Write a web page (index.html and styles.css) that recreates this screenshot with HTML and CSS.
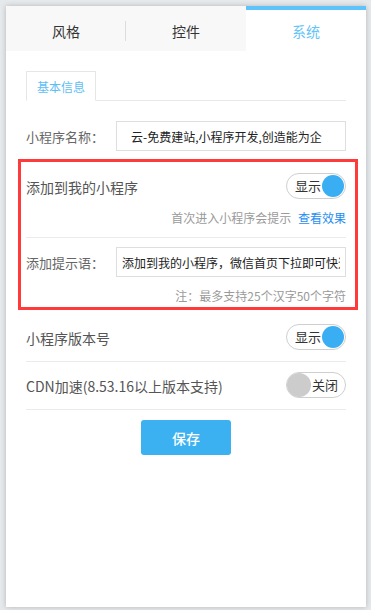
FILE: index.html
```html
<!DOCTYPE html>
<html lang="zh-CN">
<head>
<meta charset="utf-8">
<title>系统设置</title>
<link rel="stylesheet" href="styles.css">
</head>
<body>
<div class="panel">
  <div class="tabs">
    <div class="tab tab--split">风格</div>
    <div class="tab">控件</div>
    <div class="tab tab--active">系统</div>
  </div>
  <div class="content">
    <div class="subtabs">
      <div class="subtab">基本信息</div>
    </div>
    <div class="field">
      <label class="field-label">小程序名称：</label>
      <input class="field-input field-input--wide" type="text" value="云-免费建站,小程序开发,创造能为企">
    </div>
    <div class="highlight">
      <div class="row row--first">
        <span class="row-label">添加到我的小程序</span>
        <span class="toggle toggle--on"><span class="toggle-text">显示</span><span class="toggle-knob"></span></span>
      </div>
      <div class="hint">首次进入小程序会提示 <a class="hint-link">查看效果</a></div>
      <div class="divider"></div>
      <div class="field field--inner">
        <label class="field-label">添加提示语：</label>
        <input class="field-input" type="text" value="添加到我的小程序，微信首页下拉即可快速访问">
      </div>
      <div class="hint hint--note">注：最多支持25个汉字50个字符</div>
    </div>
    <div class="row row--line row--after">
      <span class="row-label">小程序版本号</span>
      <span class="toggle toggle--on"><span class="toggle-text">显示</span><span class="toggle-knob"></span></span>
    </div>
    <div class="row row--line">
      <span class="row-label">CDN加速(8.53.16以上版本支持)</span>
      <span class="toggle toggle--off"><span class="toggle-knob"></span><span class="toggle-text">关闭</span></span>
    </div>
    <div class="actions">
      <button class="btn-save" type="button">保存</button>
    </div>
  </div>
</div>
</body>
</html>
```
FILE: styles.css
```css
* { box-sizing: border-box; }
html, body { margin: 0; height: 100%; }
body {
  background: #e6e9ec;
  padding: 6px 5px 3px 6px;
  font-family: "Noto Sans CJK SC", "Noto Sans", sans-serif;
  color: #333;
}
.panel {
  width: 360px;
  height: 601px;
  background: #fff;
  box-shadow: 0 0 5px rgba(0, 0, 0, 0.22);
}
.tabs {
  display: flex;
  height: 45px;
}
.tab {
  flex: 1;
  background: #f8f8f8;
  border-top: 4px solid transparent;
  text-align: center;
  font-size: 14px;
  line-height: 42px;
  color: #333;
  position: relative;
}
.tab--split::after {
  content: "";
  position: absolute;
  right: 0;
  top: 11px;
  width: 1px;
  height: 20px;
  background: #dcdcdc;
}
.tab--active {
  background: #fff;
  border-top-color: #5ec2fb;
  color: #63c3f7;
}
.content {
  padding: 20px 20px 0;
}
.subtabs {
  display: flex;
  border-bottom: 1px solid #e8e8e8;
}
.subtab {
  height: 30px;
  margin-bottom: -1px;
  padding: 0 10px;
  border: 1px solid #e6e6e6;
  border-bottom: 1px solid #fff;
  font-size: 12px;
  line-height: 30px;
  color: #5dbef5;
  background: #fff;
}
.field {
  display: flex;
  align-items: center;
  margin-top: 20px;
}
.field--inner { margin-top: 9px; }
.field-label {
  width: 90px;
  flex: none;
  font-size: 13px;
  color: #666;
}
.field-input {
  flex: 1;
  min-width: 0;
  height: 30px;
  border: 1px solid #dedede;
  padding: 0 5px;
  font-family: inherit;
  font-size: 12px;
  color: #222;
  outline: none;
  background: #fff;
}
.field-input--wide { padding-left: 14px; }
.highlight {
  margin: 8px -12px 0 -8px;
  border: 3px solid #ff3a3a;
  padding: 0 9px 3px 5px;
}
.row {
  display: flex;
  align-items: center;
  justify-content: space-between;
  padding: 10px 0 11px;
}
.row--first { padding: 11px 0 0; }
.row--line { border-bottom: 1px solid #ebebeb; }
.row--after { margin-top: 4px; }
.row-label {
  font-size: 14px;
  color: #555;
  padding-top: 2px;
}
.toggle {
  width: 60px;
  height: 26px;
  border: 1px solid #cfcfcf;
  border-radius: 13px;
  display: flex;
  align-items: center;
  gap: 1px;
  padding: 0 1px;
  background: #fff;
}
.toggle--on { justify-content: flex-end; }
.toggle--off { justify-content: flex-start; padding-left: 0; }
.toggle-text {
  font-size: 13px;
  color: #333;
  line-height: 24px;
}
.toggle-knob {
  width: 22px;
  height: 22px;
  border-radius: 50%;
  flex: none;
}
.toggle--on .toggle-knob { background: #3aaef2; }
.toggle--off .toggle-knob { background: #cccccc; width: 24px; height: 24px; }
.hint {
  margin-top: 11px;
  text-align: right;
  font-size: 12px;
  line-height: 16px;
  color: #9a9a9a;
}
.hint--note { margin-top: 11px; }
.hint-link {
  color: #1f8ef1;
  margin-left: 4px;
  text-decoration: none;
}
.divider {
  height: 1px;
  margin-top: 11px;
  background: #ebebeb;
}
.actions {
  display: flex;
  justify-content: center;
  margin-top: 10px;
}
.btn-save {
  width: 90px;
  height: 35px;
  border: none;
  border-radius: 3px;
  background: #3bb1f1;
  color: #fff;
  font-family: inherit;
  font-size: 14px;
  font-weight: 500;
}
```
